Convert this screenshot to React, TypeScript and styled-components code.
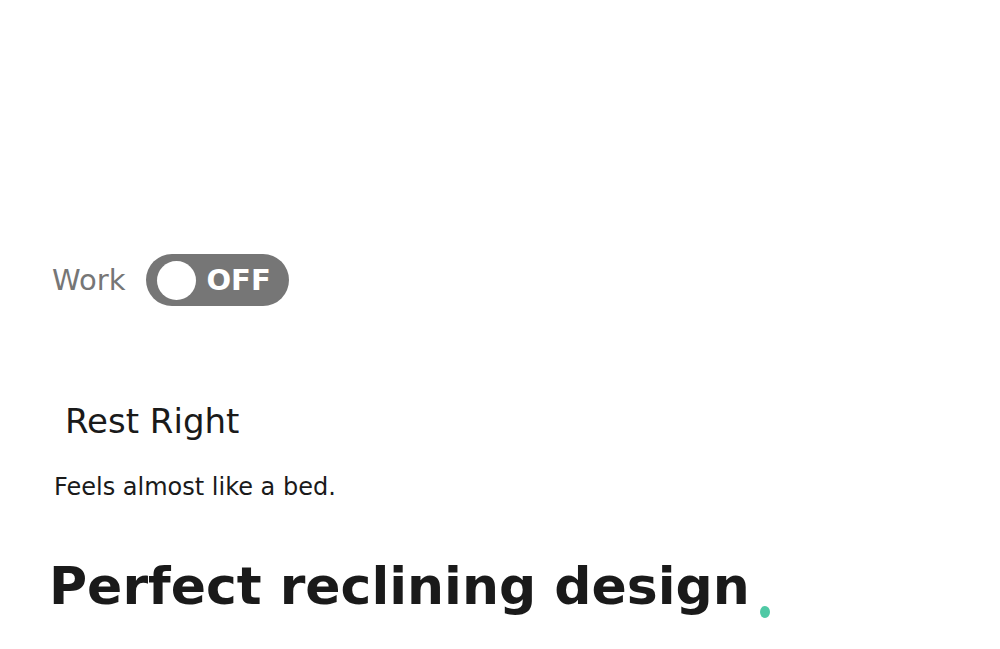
import React, { useState } from 'react';
import styled, { createGlobalStyle } from 'styled-components';

const GlobalStyle = createGlobalStyle`
  html, body {
    margin: 0;
    padding: 0;
    background: #ffffff;
    font-family: "DejaVu Sans", Verdana, sans-serif;
  }
`;

const Page = styled.div`
  display: flex;
  flex-direction: column;
  align-items: flex-start;
  padding: 254px 0 0 54px;
  min-height: 649px;
  box-sizing: border-box;
`;

const SettingRow = styled.div`
  display: flex;
  align-items: center;
  gap: 21px;
  margin-left: -2px;
`;

const SettingLabel = styled.span`
  font-size: 29px;
  line-height: 32px;
  color: #767676;
`;

const Toggle = styled.button<{ $on: boolean }>`
  display: flex;
  align-items: center;
  gap: 10px;
  width: 143px;
  height: 52px;
  padding: 0 11px;
  border: none;
  border-radius: 26px;
  background: ${({ $on }) => ($on ? '#4fc9a5' : '#767676')};
  cursor: pointer;
  box-sizing: border-box;
`;

const Knob = styled.span`
  width: 39px;
  height: 39px;
  border-radius: 50%;
  background: #ffffff;
  flex-shrink: 0;
`;

const ToggleText = styled.span`
  font-family: "DejaVu Sans", sans-serif;
  font-weight: 700;
  font-size: 29px;
  line-height: 32px;
  color: #ffffff;
`;

const Title = styled.h2`
  margin: 95px 0 0 11px;
  font-size: 34px;
  line-height: 40px;
  font-weight: normal;
  color: #1a1a1a;
`;

const Subtitle = styled.p`
  margin: 32px 0 0 0;
  font-size: 24px;
  line-height: 28px;
  color: #1a1a1a;
`;

const HeadingRow = styled.div`
  display: flex;
  align-items: flex-end;
  margin: 55px 0 0 -5px;
`;

const Heading = styled.h1`
  margin: 0;
  font-size: 52px;
  line-height: 60px;
  font-weight: bold;
  color: #1a1a1a;
`;

const Dot = styled.span`
  width: 10px;
  height: 12px;
  margin: 0 0 -2px 10px;
  border-radius: 50%;
  background: #4fc9a5;
`;

const App: React.FC = () => {
  const [work, setWork] = useState(false);

  return (
    <>
      <GlobalStyle />
      <Page>
        <SettingRow>
          <SettingLabel>Work</SettingLabel>
          <Toggle $on={work} onClick={() => setWork(!work)}>
            <Knob />
            <ToggleText>{work ? 'ON' : 'OFF'}</ToggleText>
          </Toggle>
        </SettingRow>
        <Title>Rest Right</Title>
        <Subtitle>Feels almost like a bed.</Subtitle>
        <HeadingRow>
          <Heading>Perfect reclining design</Heading>
          <Dot />
        </HeadingRow>
      </Page>
    </>
  );
};

export default App;
